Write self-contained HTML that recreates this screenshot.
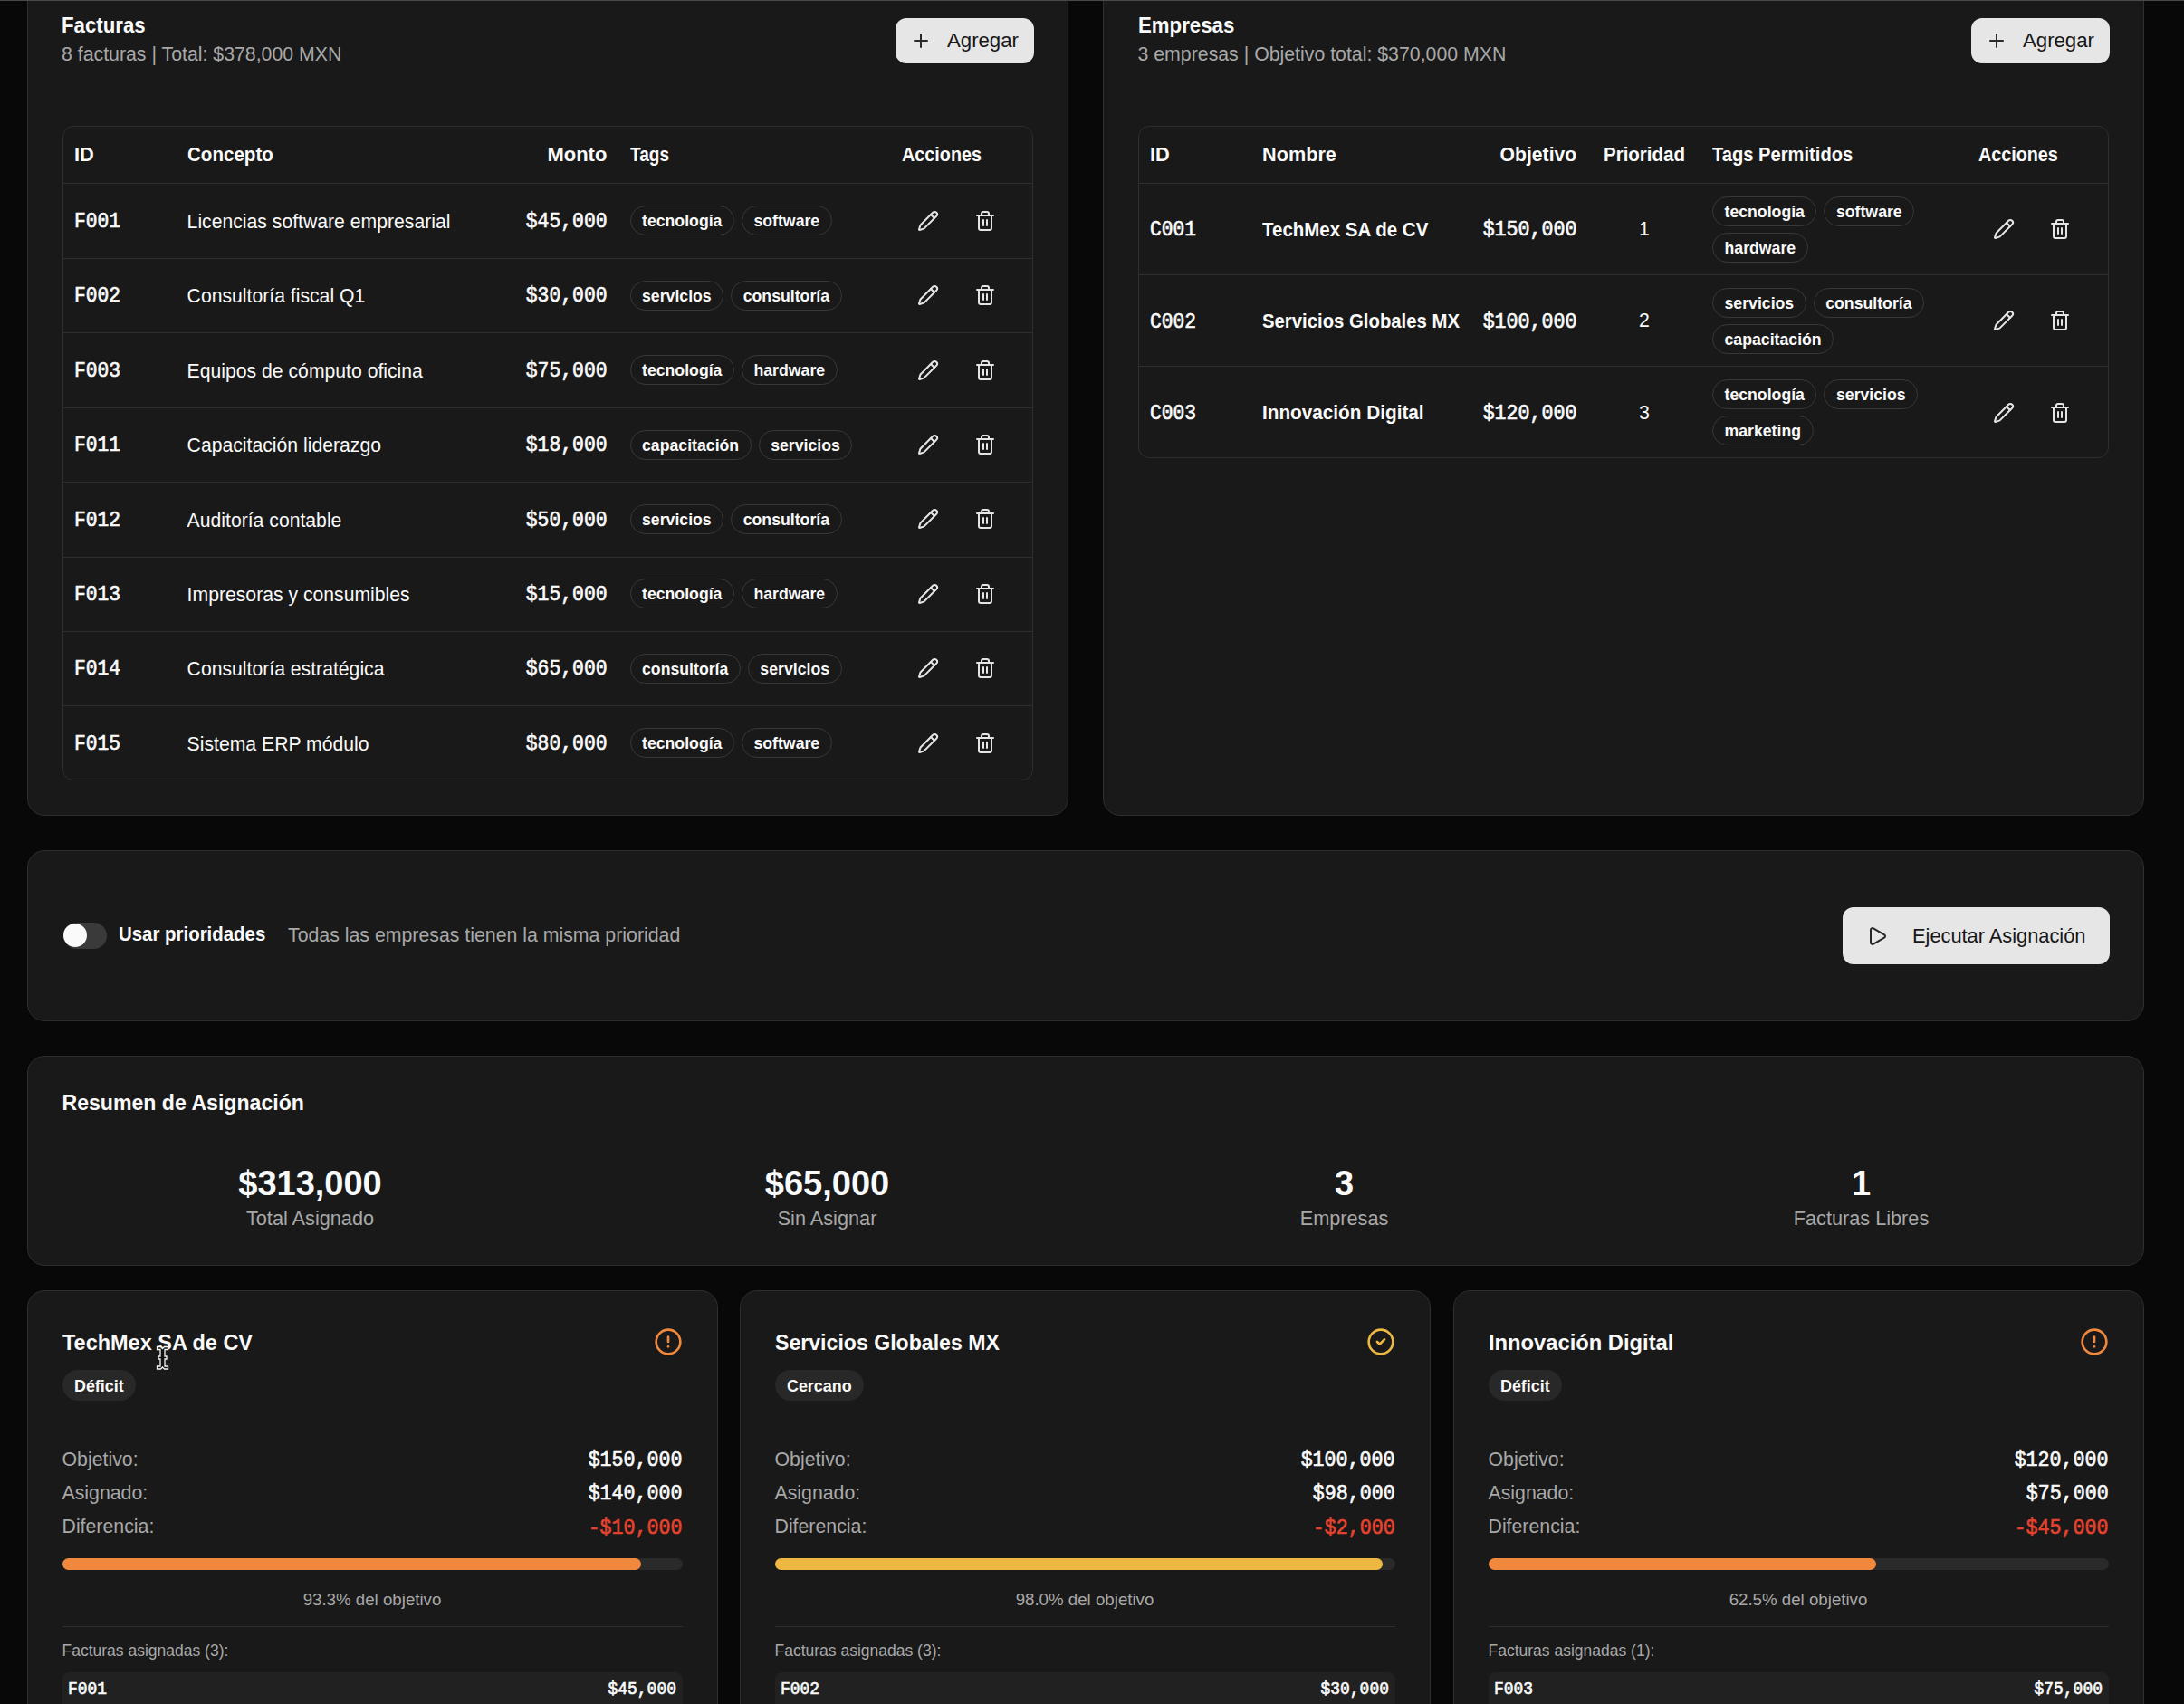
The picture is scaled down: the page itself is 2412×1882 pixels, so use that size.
<!DOCTYPE html><html><head><meta charset="utf-8"><style>
*{box-sizing:border-box;margin:0;padding:0}
html,body{width:2412px;height:1882px;overflow:hidden;background:#080808}
body{position:relative;font-family:"Liberation Sans", sans-serif}
.b{position:absolute}
.t{position:absolute;white-space:nowrap}
.s{font-family:"Liberation Sans", sans-serif}
.m{font-family:"Liberation Mono", monospace}
.pills{position:absolute;display:flex;flex-wrap:wrap;gap:7px 8px}
.pill{display:inline-flex;align-items:center;height:33px;padding:3px 12.5px 0;border:1px solid #383838;border-radius:999px;font-family:"Liberation Sans", sans-serif;font-weight:700;font-size:17.7px;color:#fafafa;white-space:nowrap;line-height:1}
.badge{position:absolute;display:inline-flex;align-items:center;height:34px;padding:4px 13.5px 0;background:#282828;border-radius:999px;font-family:"Liberation Sans", sans-serif;font-weight:700;font-size:17.9px;color:#fafafa;line-height:1}
</style></head><body>
<div class="b" style="left:0px;top:0px;width:2412px;height:1px;background:#4a4a4a;z-index:5;"></div>
<div class="b" style="left:30px;top:-60px;width:1150px;height:961px;background:#191919;border:1px solid #2e2e2e;border-radius:19px;"></div>
<div class="t s" style="left:68.00px;transform:scaleX(0.9066);transform-origin:0 0;top:12.51px;font-size:24.5px;line-height:29.4px;font-weight:700;color:#fafafa;">Facturas</div>
<div class="t s" style="left:68.00px;top:47.84px;font-size:21.3px;line-height:25.56px;color:#a8a8a8;">8 facturas | Total: $378,000 MXN</div>
<div class="b" style="left:989px;top:20px;width:153px;height:50px;background:#e6e6e6;border-radius:12px;"></div>
<svg class="b" style="left:1005px;top:33px" width="24" height="24" viewBox="0 0 24 24" fill="none" stroke="#2a2a2a" stroke-width="2" stroke-linecap="round" stroke-linejoin="round"><path d="M5 12h14"/><path d="M12 5v14"/></svg>
<div class="t s" style="left:1046.00px;top:31.98px;font-size:22.2px;line-height:26.64px;color:#171717;">Agregar</div>
<div class="b" style="left:69px;top:139px;width:1072px;height:723px;border:1px solid #2e2e2e;border-radius:12px;"></div>
<div class="t s" style="left:82.00px;top:157.76px;font-size:21.8px;line-height:26.16px;font-weight:700;color:#fafafa;">ID</div>
<div class="t s" style="left:206.60px;transform:scaleX(0.9431);transform-origin:0 0;top:157.76px;font-size:21.8px;line-height:26.16px;font-weight:700;color:#fafafa;">Concepto</div>
<div class="t s" style="right:1741.50px;transform:scaleX(1.0083);transform-origin:100% 0;top:157.76px;font-size:21.8px;line-height:26.16px;font-weight:700;color:#fafafa;">Monto</div>
<div class="t s" style="left:696.00px;transform:scaleX(0.8728);transform-origin:0 0;top:157.76px;font-size:21.8px;line-height:26.16px;font-weight:700;color:#fafafa;">Tags</div>
<div class="t s" style="left:996.00px;transform:scaleX(0.9079);transform-origin:0 0;top:157.76px;font-size:21.8px;line-height:26.16px;font-weight:700;color:#fafafa;">Acciones</div>
<div class="b" style="left:70px;top:202px;width:1070px;height:1px;background:#2e2e2e;"></div>
<div class="t m" style="left:82.00px;transform:scaleX(0.924);transform-origin:0 0;top:232.08px;font-size:23px;line-height:27.6px;font-weight:400;-webkit-text-stroke:0.65px currentColor;color:#fafafa;">F001</div>
<div class="t s" style="left:206.60px;top:231.93px;font-size:21.2px;line-height:25.44px;color:#fafafa;">Licencias software empresarial</div>
<div class="t m" style="right:1741.50px;transform:scaleX(0.93);transform-origin:100% 0;top:232.08px;font-size:23px;line-height:27.6px;font-weight:400;-webkit-text-stroke:0.65px currentColor;color:#fafafa;">$45,000</div>
<div class="pills" style="left:695.5px;top:227.30px;"><span class="pill">tecnología</span><span class="pill">software</span></div>
<svg class="b" style="left:1013px;top:231.8px" width="24" height="24" viewBox="0 0 24 24" fill="none" stroke="#e5e5e5" stroke-width="2" stroke-linecap="round" stroke-linejoin="round"><path d="M21.174 6.812a1 1 0 0 0-3.986-3.987L3.842 16.174a2 2 0 0 0-.5.83l-1.321 4.352a.5.5 0 0 0 .623.622l4.353-1.32a2 2 0 0 0 .83-.497z"/><path d="m15 5 4 4"/></svg>
<svg class="b" style="left:1075.5px;top:231.8px" width="24" height="24" viewBox="0 0 24 24" fill="none" stroke="#e5e5e5" stroke-width="2" stroke-linecap="round" stroke-linejoin="round"><path d="M3 6h18"/><path d="M19 6v14c0 1-1 2-2 2H7c-1 0-2-1-2-2V6"/><path d="M8 6V4c0-1 1-2 2-2h4c1 0 2 1 2 2v2"/><line x1="10" x2="10" y1="11" y2="17"/><line x1="14" x2="14" y1="11" y2="17"/></svg>
<div class="b" style="left:70px;top:285px;width:1070px;height:1px;background:#2e2e2e;"></div>
<div class="t m" style="left:82.00px;transform:scaleX(0.924);transform-origin:0 0;top:314.48px;font-size:23px;line-height:27.6px;font-weight:400;-webkit-text-stroke:0.65px currentColor;color:#fafafa;">F002</div>
<div class="t s" style="left:206.60px;top:314.33px;font-size:21.2px;line-height:25.44px;color:#fafafa;">Consultoría fiscal Q1</div>
<div class="t m" style="right:1741.50px;transform:scaleX(0.93);transform-origin:100% 0;top:314.48px;font-size:23px;line-height:27.6px;font-weight:400;-webkit-text-stroke:0.65px currentColor;color:#fafafa;">$30,000</div>
<div class="pills" style="left:695.5px;top:309.70px;"><span class="pill">servicios</span><span class="pill">consultoría</span></div>
<svg class="b" style="left:1013px;top:314.20000000000005px" width="24" height="24" viewBox="0 0 24 24" fill="none" stroke="#e5e5e5" stroke-width="2" stroke-linecap="round" stroke-linejoin="round"><path d="M21.174 6.812a1 1 0 0 0-3.986-3.987L3.842 16.174a2 2 0 0 0-.5.83l-1.321 4.352a.5.5 0 0 0 .623.622l4.353-1.32a2 2 0 0 0 .83-.497z"/><path d="m15 5 4 4"/></svg>
<svg class="b" style="left:1075.5px;top:314.20000000000005px" width="24" height="24" viewBox="0 0 24 24" fill="none" stroke="#e5e5e5" stroke-width="2" stroke-linecap="round" stroke-linejoin="round"><path d="M3 6h18"/><path d="M19 6v14c0 1-1 2-2 2H7c-1 0-2-1-2-2V6"/><path d="M8 6V4c0-1 1-2 2-2h4c1 0 2 1 2 2v2"/><line x1="10" x2="10" y1="11" y2="17"/><line x1="14" x2="14" y1="11" y2="17"/></svg>
<div class="b" style="left:70px;top:367px;width:1070px;height:1px;background:#2e2e2e;"></div>
<div class="t m" style="left:82.00px;transform:scaleX(0.924);transform-origin:0 0;top:396.88px;font-size:23px;line-height:27.6px;font-weight:400;-webkit-text-stroke:0.65px currentColor;color:#fafafa;">F003</div>
<div class="t s" style="left:206.60px;top:396.73px;font-size:21.2px;line-height:25.44px;color:#fafafa;">Equipos de cómputo oficina</div>
<div class="t m" style="right:1741.50px;transform:scaleX(0.93);transform-origin:100% 0;top:396.88px;font-size:23px;line-height:27.6px;font-weight:400;-webkit-text-stroke:0.65px currentColor;color:#fafafa;">$75,000</div>
<div class="pills" style="left:695.5px;top:392.10px;"><span class="pill">tecnología</span><span class="pill">hardware</span></div>
<svg class="b" style="left:1013px;top:396.6px" width="24" height="24" viewBox="0 0 24 24" fill="none" stroke="#e5e5e5" stroke-width="2" stroke-linecap="round" stroke-linejoin="round"><path d="M21.174 6.812a1 1 0 0 0-3.986-3.987L3.842 16.174a2 2 0 0 0-.5.83l-1.321 4.352a.5.5 0 0 0 .623.622l4.353-1.32a2 2 0 0 0 .83-.497z"/><path d="m15 5 4 4"/></svg>
<svg class="b" style="left:1075.5px;top:396.6px" width="24" height="24" viewBox="0 0 24 24" fill="none" stroke="#e5e5e5" stroke-width="2" stroke-linecap="round" stroke-linejoin="round"><path d="M3 6h18"/><path d="M19 6v14c0 1-1 2-2 2H7c-1 0-2-1-2-2V6"/><path d="M8 6V4c0-1 1-2 2-2h4c1 0 2 1 2 2v2"/><line x1="10" x2="10" y1="11" y2="17"/><line x1="14" x2="14" y1="11" y2="17"/></svg>
<div class="b" style="left:70px;top:450px;width:1070px;height:1px;background:#2e2e2e;"></div>
<div class="t m" style="left:82.00px;transform:scaleX(0.924);transform-origin:0 0;top:479.28px;font-size:23px;line-height:27.6px;font-weight:400;-webkit-text-stroke:0.65px currentColor;color:#fafafa;">F011</div>
<div class="t s" style="left:206.60px;top:479.13px;font-size:21.2px;line-height:25.44px;color:#fafafa;">Capacitación liderazgo</div>
<div class="t m" style="right:1741.50px;transform:scaleX(0.93);transform-origin:100% 0;top:479.28px;font-size:23px;line-height:27.6px;font-weight:400;-webkit-text-stroke:0.65px currentColor;color:#fafafa;">$18,000</div>
<div class="pills" style="left:695.5px;top:474.50px;"><span class="pill">capacitación</span><span class="pill">servicios</span></div>
<svg class="b" style="left:1013px;top:479.0px" width="24" height="24" viewBox="0 0 24 24" fill="none" stroke="#e5e5e5" stroke-width="2" stroke-linecap="round" stroke-linejoin="round"><path d="M21.174 6.812a1 1 0 0 0-3.986-3.987L3.842 16.174a2 2 0 0 0-.5.83l-1.321 4.352a.5.5 0 0 0 .623.622l4.353-1.32a2 2 0 0 0 .83-.497z"/><path d="m15 5 4 4"/></svg>
<svg class="b" style="left:1075.5px;top:479.0px" width="24" height="24" viewBox="0 0 24 24" fill="none" stroke="#e5e5e5" stroke-width="2" stroke-linecap="round" stroke-linejoin="round"><path d="M3 6h18"/><path d="M19 6v14c0 1-1 2-2 2H7c-1 0-2-1-2-2V6"/><path d="M8 6V4c0-1 1-2 2-2h4c1 0 2 1 2 2v2"/><line x1="10" x2="10" y1="11" y2="17"/><line x1="14" x2="14" y1="11" y2="17"/></svg>
<div class="b" style="left:70px;top:532px;width:1070px;height:1px;background:#2e2e2e;"></div>
<div class="t m" style="left:82.00px;transform:scaleX(0.924);transform-origin:0 0;top:561.68px;font-size:23px;line-height:27.6px;font-weight:400;-webkit-text-stroke:0.65px currentColor;color:#fafafa;">F012</div>
<div class="t s" style="left:206.60px;top:561.53px;font-size:21.2px;line-height:25.44px;color:#fafafa;">Auditoría contable</div>
<div class="t m" style="right:1741.50px;transform:scaleX(0.93);transform-origin:100% 0;top:561.68px;font-size:23px;line-height:27.6px;font-weight:400;-webkit-text-stroke:0.65px currentColor;color:#fafafa;">$50,000</div>
<div class="pills" style="left:695.5px;top:556.90px;"><span class="pill">servicios</span><span class="pill">consultoría</span></div>
<svg class="b" style="left:1013px;top:561.4000000000001px" width="24" height="24" viewBox="0 0 24 24" fill="none" stroke="#e5e5e5" stroke-width="2" stroke-linecap="round" stroke-linejoin="round"><path d="M21.174 6.812a1 1 0 0 0-3.986-3.987L3.842 16.174a2 2 0 0 0-.5.83l-1.321 4.352a.5.5 0 0 0 .623.622l4.353-1.32a2 2 0 0 0 .83-.497z"/><path d="m15 5 4 4"/></svg>
<svg class="b" style="left:1075.5px;top:561.4000000000001px" width="24" height="24" viewBox="0 0 24 24" fill="none" stroke="#e5e5e5" stroke-width="2" stroke-linecap="round" stroke-linejoin="round"><path d="M3 6h18"/><path d="M19 6v14c0 1-1 2-2 2H7c-1 0-2-1-2-2V6"/><path d="M8 6V4c0-1 1-2 2-2h4c1 0 2 1 2 2v2"/><line x1="10" x2="10" y1="11" y2="17"/><line x1="14" x2="14" y1="11" y2="17"/></svg>
<div class="b" style="left:70px;top:615px;width:1070px;height:1px;background:#2e2e2e;"></div>
<div class="t m" style="left:82.00px;transform:scaleX(0.924);transform-origin:0 0;top:644.08px;font-size:23px;line-height:27.6px;font-weight:400;-webkit-text-stroke:0.65px currentColor;color:#fafafa;">F013</div>
<div class="t s" style="left:206.60px;top:643.93px;font-size:21.2px;line-height:25.44px;color:#fafafa;">Impresoras y consumibles</div>
<div class="t m" style="right:1741.50px;transform:scaleX(0.93);transform-origin:100% 0;top:644.08px;font-size:23px;line-height:27.6px;font-weight:400;-webkit-text-stroke:0.65px currentColor;color:#fafafa;">$15,000</div>
<div class="pills" style="left:695.5px;top:639.30px;"><span class="pill">tecnología</span><span class="pill">hardware</span></div>
<svg class="b" style="left:1013px;top:643.8px" width="24" height="24" viewBox="0 0 24 24" fill="none" stroke="#e5e5e5" stroke-width="2" stroke-linecap="round" stroke-linejoin="round"><path d="M21.174 6.812a1 1 0 0 0-3.986-3.987L3.842 16.174a2 2 0 0 0-.5.83l-1.321 4.352a.5.5 0 0 0 .623.622l4.353-1.32a2 2 0 0 0 .83-.497z"/><path d="m15 5 4 4"/></svg>
<svg class="b" style="left:1075.5px;top:643.8px" width="24" height="24" viewBox="0 0 24 24" fill="none" stroke="#e5e5e5" stroke-width="2" stroke-linecap="round" stroke-linejoin="round"><path d="M3 6h18"/><path d="M19 6v14c0 1-1 2-2 2H7c-1 0-2-1-2-2V6"/><path d="M8 6V4c0-1 1-2 2-2h4c1 0 2 1 2 2v2"/><line x1="10" x2="10" y1="11" y2="17"/><line x1="14" x2="14" y1="11" y2="17"/></svg>
<div class="b" style="left:70px;top:697px;width:1070px;height:1px;background:#2e2e2e;"></div>
<div class="t m" style="left:82.00px;transform:scaleX(0.924);transform-origin:0 0;top:726.48px;font-size:23px;line-height:27.6px;font-weight:400;-webkit-text-stroke:0.65px currentColor;color:#fafafa;">F014</div>
<div class="t s" style="left:206.60px;top:726.33px;font-size:21.2px;line-height:25.44px;color:#fafafa;">Consultoría estratégica</div>
<div class="t m" style="right:1741.50px;transform:scaleX(0.93);transform-origin:100% 0;top:726.48px;font-size:23px;line-height:27.6px;font-weight:400;-webkit-text-stroke:0.65px currentColor;color:#fafafa;">$65,000</div>
<div class="pills" style="left:695.5px;top:721.70px;"><span class="pill">consultoría</span><span class="pill">servicios</span></div>
<svg class="b" style="left:1013px;top:726.2px" width="24" height="24" viewBox="0 0 24 24" fill="none" stroke="#e5e5e5" stroke-width="2" stroke-linecap="round" stroke-linejoin="round"><path d="M21.174 6.812a1 1 0 0 0-3.986-3.987L3.842 16.174a2 2 0 0 0-.5.83l-1.321 4.352a.5.5 0 0 0 .623.622l4.353-1.32a2 2 0 0 0 .83-.497z"/><path d="m15 5 4 4"/></svg>
<svg class="b" style="left:1075.5px;top:726.2px" width="24" height="24" viewBox="0 0 24 24" fill="none" stroke="#e5e5e5" stroke-width="2" stroke-linecap="round" stroke-linejoin="round"><path d="M3 6h18"/><path d="M19 6v14c0 1-1 2-2 2H7c-1 0-2-1-2-2V6"/><path d="M8 6V4c0-1 1-2 2-2h4c1 0 2 1 2 2v2"/><line x1="10" x2="10" y1="11" y2="17"/><line x1="14" x2="14" y1="11" y2="17"/></svg>
<div class="b" style="left:70px;top:779px;width:1070px;height:1px;background:#2e2e2e;"></div>
<div class="t m" style="left:82.00px;transform:scaleX(0.924);transform-origin:0 0;top:808.88px;font-size:23px;line-height:27.6px;font-weight:400;-webkit-text-stroke:0.65px currentColor;color:#fafafa;">F015</div>
<div class="t s" style="left:206.60px;top:808.73px;font-size:21.2px;line-height:25.44px;color:#fafafa;">Sistema ERP módulo</div>
<div class="t m" style="right:1741.50px;transform:scaleX(0.93);transform-origin:100% 0;top:808.88px;font-size:23px;line-height:27.6px;font-weight:400;-webkit-text-stroke:0.65px currentColor;color:#fafafa;">$80,000</div>
<div class="pills" style="left:695.5px;top:804.10px;"><span class="pill">tecnología</span><span class="pill">software</span></div>
<svg class="b" style="left:1013px;top:808.6000000000001px" width="24" height="24" viewBox="0 0 24 24" fill="none" stroke="#e5e5e5" stroke-width="2" stroke-linecap="round" stroke-linejoin="round"><path d="M21.174 6.812a1 1 0 0 0-3.986-3.987L3.842 16.174a2 2 0 0 0-.5.83l-1.321 4.352a.5.5 0 0 0 .623.622l4.353-1.32a2 2 0 0 0 .83-.497z"/><path d="m15 5 4 4"/></svg>
<svg class="b" style="left:1075.5px;top:808.6000000000001px" width="24" height="24" viewBox="0 0 24 24" fill="none" stroke="#e5e5e5" stroke-width="2" stroke-linecap="round" stroke-linejoin="round"><path d="M3 6h18"/><path d="M19 6v14c0 1-1 2-2 2H7c-1 0-2-1-2-2V6"/><path d="M8 6V4c0-1 1-2 2-2h4c1 0 2 1 2 2v2"/><line x1="10" x2="10" y1="11" y2="17"/><line x1="14" x2="14" y1="11" y2="17"/></svg>
<div class="b" style="left:1218px;top:-60px;width:1150px;height:961px;background:#191919;border:1px solid #2e2e2e;border-radius:19px;"></div>
<div class="t s" style="left:1256.50px;transform:scaleX(0.9075);transform-origin:0 0;top:12.51px;font-size:24.5px;line-height:29.4px;font-weight:700;color:#fafafa;">Empresas</div>
<div class="t s" style="left:1256.50px;top:47.84px;font-size:21.3px;line-height:25.56px;color:#a8a8a8;">3 empresas | Objetivo total: $370,000 MXN</div>
<div class="b" style="left:2177px;top:20px;width:153px;height:50px;background:#e6e6e6;border-radius:12px;"></div>
<svg class="b" style="left:2193px;top:33px" width="24" height="24" viewBox="0 0 24 24" fill="none" stroke="#2a2a2a" stroke-width="2" stroke-linecap="round" stroke-linejoin="round"><path d="M5 12h14"/><path d="M12 5v14"/></svg>
<div class="t s" style="left:2234.00px;top:31.98px;font-size:22.2px;line-height:26.64px;color:#171717;">Agregar</div>
<div class="b" style="left:1257px;top:139px;width:1072px;height:367px;border:1px solid #2e2e2e;border-radius:12px;"></div>
<div class="t s" style="left:1270.00px;top:157.76px;font-size:21.8px;line-height:26.16px;font-weight:700;color:#fafafa;">ID</div>
<div class="t s" style="left:1394.00px;transform:scaleX(0.9944);transform-origin:0 0;top:157.76px;font-size:21.8px;line-height:26.16px;font-weight:700;color:#fafafa;">Nombre</div>
<div class="t s" style="right:671.00px;transform:scaleX(0.9701);transform-origin:100% 0;top:157.76px;font-size:21.8px;line-height:26.16px;font-weight:700;color:#fafafa;">Objetivo</div>
<div class="t s" style="left:1815.80px;transform:translateX(-50%) scaleX(0.9406);top:157.76px;font-size:21.8px;line-height:26.16px;font-weight:700;color:#fafafa;">Prioridad</div>
<div class="t s" style="left:1891.00px;transform:scaleX(0.9240);transform-origin:0 0;top:157.76px;font-size:21.8px;line-height:26.16px;font-weight:700;color:#fafafa;">Tags Permitidos</div>
<div class="t s" style="left:2184.70px;transform:scaleX(0.9059);transform-origin:0 0;top:157.76px;font-size:21.8px;line-height:26.16px;font-weight:700;color:#fafafa;">Acciones</div>
<div class="b" style="left:1258px;top:202px;width:1070px;height:1px;background:#2e2e2e;"></div>
<div class="t m" style="left:1270.00px;transform:scaleX(0.924);transform-origin:0 0;top:241.48px;font-size:23px;line-height:27.6px;font-weight:400;-webkit-text-stroke:0.65px currentColor;color:#fafafa;">C001</div>
<div class="t s" style="left:1394.00px;transform:scaleX(0.9399);transform-origin:0 0;top:240.76px;font-size:21.8px;line-height:26.16px;font-weight:700;color:#fafafa;">TechMex SA de CV</div>
<div class="t m" style="right:671.00px;transform:scaleX(0.94);transform-origin:100% 0;top:241.48px;font-size:23px;line-height:27.6px;font-weight:400;-webkit-text-stroke:0.65px currentColor;color:#fafafa;">$150,000</div>
<div class="t s" style="left:1816.00px;transform:translateX(-50%) ;top:241.24px;font-size:21.3px;line-height:25.56px;color:#fafafa;">1</div>
<div class="pills" style="left:1891px;top:216.60px;width:250px;"><span class="pill">tecnología</span><span class="pill">software</span><span class="pill">hardware</span></div>
<svg class="b" style="left:2201.4px;top:241.2px" width="24" height="24" viewBox="0 0 24 24" fill="none" stroke="#e5e5e5" stroke-width="2" stroke-linecap="round" stroke-linejoin="round"><path d="M21.174 6.812a1 1 0 0 0-3.986-3.987L3.842 16.174a2 2 0 0 0-.5.83l-1.321 4.352a.5.5 0 0 0 .623.622l4.353-1.32a2 2 0 0 0 .83-.497z"/><path d="m15 5 4 4"/></svg>
<svg class="b" style="left:2263.3px;top:241.2px" width="24" height="24" viewBox="0 0 24 24" fill="none" stroke="#e5e5e5" stroke-width="2" stroke-linecap="round" stroke-linejoin="round"><path d="M3 6h18"/><path d="M19 6v14c0 1-1 2-2 2H7c-1 0-2-1-2-2V6"/><path d="M8 6V4c0-1 1-2 2-2h4c1 0 2 1 2 2v2"/><line x1="10" x2="10" y1="11" y2="17"/><line x1="14" x2="14" y1="11" y2="17"/></svg>
<div class="b" style="left:1258px;top:303px;width:1070px;height:1px;background:#2e2e2e;"></div>
<div class="t m" style="left:1270.00px;transform:scaleX(0.924);transform-origin:0 0;top:342.68px;font-size:23px;line-height:27.6px;font-weight:400;-webkit-text-stroke:0.65px currentColor;color:#fafafa;">C002</div>
<div class="t s" style="left:1394.00px;transform:scaleX(0.9324);transform-origin:0 0;top:341.96px;font-size:21.8px;line-height:26.16px;font-weight:700;color:#fafafa;">Servicios Globales MX</div>
<div class="t m" style="right:671.00px;transform:scaleX(0.94);transform-origin:100% 0;top:342.68px;font-size:23px;line-height:27.6px;font-weight:400;-webkit-text-stroke:0.65px currentColor;color:#fafafa;">$100,000</div>
<div class="t s" style="left:1816.00px;transform:translateX(-50%) ;top:342.44px;font-size:21.3px;line-height:25.56px;color:#fafafa;">2</div>
<div class="pills" style="left:1891px;top:317.80px;width:250px;"><span class="pill">servicios</span><span class="pill">consultoría</span><span class="pill">capacitación</span></div>
<svg class="b" style="left:2201.4px;top:342.4px" width="24" height="24" viewBox="0 0 24 24" fill="none" stroke="#e5e5e5" stroke-width="2" stroke-linecap="round" stroke-linejoin="round"><path d="M21.174 6.812a1 1 0 0 0-3.986-3.987L3.842 16.174a2 2 0 0 0-.5.83l-1.321 4.352a.5.5 0 0 0 .623.622l4.353-1.32a2 2 0 0 0 .83-.497z"/><path d="m15 5 4 4"/></svg>
<svg class="b" style="left:2263.3px;top:342.4px" width="24" height="24" viewBox="0 0 24 24" fill="none" stroke="#e5e5e5" stroke-width="2" stroke-linecap="round" stroke-linejoin="round"><path d="M3 6h18"/><path d="M19 6v14c0 1-1 2-2 2H7c-1 0-2-1-2-2V6"/><path d="M8 6V4c0-1 1-2 2-2h4c1 0 2 1 2 2v2"/><line x1="10" x2="10" y1="11" y2="17"/><line x1="14" x2="14" y1="11" y2="17"/></svg>
<div class="b" style="left:1258px;top:404px;width:1070px;height:1px;background:#2e2e2e;"></div>
<div class="t m" style="left:1270.00px;transform:scaleX(0.924);transform-origin:0 0;top:443.88px;font-size:23px;line-height:27.6px;font-weight:400;-webkit-text-stroke:0.65px currentColor;color:#fafafa;">C003</div>
<div class="t s" style="left:1394.00px;transform:scaleX(0.9514);transform-origin:0 0;top:443.16px;font-size:21.8px;line-height:26.16px;font-weight:700;color:#fafafa;">Innovación Digital</div>
<div class="t m" style="right:671.00px;transform:scaleX(0.94);transform-origin:100% 0;top:443.88px;font-size:23px;line-height:27.6px;font-weight:400;-webkit-text-stroke:0.65px currentColor;color:#fafafa;">$120,000</div>
<div class="t s" style="left:1816.00px;transform:translateX(-50%) ;top:443.64px;font-size:21.3px;line-height:25.56px;color:#fafafa;">3</div>
<div class="pills" style="left:1891px;top:419.00px;width:250px;"><span class="pill">tecnología</span><span class="pill">servicios</span><span class="pill">marketing</span></div>
<svg class="b" style="left:2201.4px;top:443.6px" width="24" height="24" viewBox="0 0 24 24" fill="none" stroke="#e5e5e5" stroke-width="2" stroke-linecap="round" stroke-linejoin="round"><path d="M21.174 6.812a1 1 0 0 0-3.986-3.987L3.842 16.174a2 2 0 0 0-.5.83l-1.321 4.352a.5.5 0 0 0 .623.622l4.353-1.32a2 2 0 0 0 .83-.497z"/><path d="m15 5 4 4"/></svg>
<svg class="b" style="left:2263.3px;top:443.6px" width="24" height="24" viewBox="0 0 24 24" fill="none" stroke="#e5e5e5" stroke-width="2" stroke-linecap="round" stroke-linejoin="round"><path d="M3 6h18"/><path d="M19 6v14c0 1-1 2-2 2H7c-1 0-2-1-2-2V6"/><path d="M8 6V4c0-1 1-2 2-2h4c1 0 2 1 2 2v2"/><line x1="10" x2="10" y1="11" y2="17"/><line x1="14" x2="14" y1="11" y2="17"/></svg>
<div class="b" style="left:30px;top:939px;width:2338px;height:189px;background:#191919;border:1px solid #2e2e2e;border-radius:19px;"></div>
<div class="b" style="left:70px;top:1018.5px;width:48px;height:29.5px;background:#3a3a3a;border-radius:15px;"></div>
<div class="b" style="left:70px;top:1019.5px;width:26px;height:26.0px;background:#fafafa;border-radius:50%;"></div>
<div class="t s" style="left:130.50px;transform:scaleX(0.9204);transform-origin:0 0;top:1018.98px;font-size:22.2px;line-height:26.64px;font-weight:700;color:#fafafa;">Usar prioridades</div>
<div class="t s" style="left:318.00px;top:1021.34px;font-size:21.3px;line-height:25.56px;color:#a8a8a8;">Todas las empresas tienen la misma prioridad</div>
<div class="b" style="left:2035px;top:1002px;width:295px;height:63px;background:#e6e6e6;border-radius:12px;"></div>
<svg class="b" style="left:2061px;top:1021.5px" width="24" height="24" viewBox="0 0 24 24" fill="none" stroke="#262626" stroke-width="2" stroke-linecap="round" stroke-linejoin="round"><path d="M5 5a2 2 0 0 1 3.008-1.728l11.997 6.998a2 2 0 0 1 .003 3.458l-12 7A2 2 0 0 1 5 19z"/></svg>
<div class="t s" style="left:2112.00px;top:1020.76px;font-size:21.8px;line-height:26.16px;color:#171717;">Ejecutar Asignación</div>
<div class="b" style="left:30px;top:1166px;width:2338px;height:232px;background:#191919;border:1px solid #2e2e2e;border-radius:19px;"></div>
<div class="t s" style="left:68.50px;top:1204.53px;font-size:23.1px;line-height:27.72px;font-weight:700;color:#fafafa;">Resumen de Asignación</div>
<div class="t s" style="left:342.50px;transform:translateX(-50%) ;top:1284.53px;font-size:38px;line-height:45.6px;font-weight:700;color:#fafafa;">$313,000</div>
<div class="t s" style="left:342.50px;transform:translateX(-50%) ;top:1332.96px;font-size:21.7px;line-height:26.04px;color:#a8a8a8;">Total Asignado</div>
<div class="t s" style="left:913.50px;transform:translateX(-50%) ;top:1284.53px;font-size:38px;line-height:45.6px;font-weight:700;color:#fafafa;">$65,000</div>
<div class="t s" style="left:913.50px;transform:translateX(-50%) ;top:1332.96px;font-size:21.7px;line-height:26.04px;color:#a8a8a8;">Sin Asignar</div>
<div class="t s" style="left:1484.50px;transform:translateX(-50%) ;top:1284.53px;font-size:38px;line-height:45.6px;font-weight:700;color:#fafafa;">3</div>
<div class="t s" style="left:1484.50px;transform:translateX(-50%) ;top:1332.96px;font-size:21.7px;line-height:26.04px;color:#a8a8a8;">Empresas</div>
<div class="t s" style="left:2055.50px;transform:translateX(-50%) ;top:1284.53px;font-size:38px;line-height:45.6px;font-weight:700;color:#fafafa;">1</div>
<div class="t s" style="left:2055.50px;transform:translateX(-50%) ;top:1332.96px;font-size:21.7px;line-height:26.04px;color:#a8a8a8;">Facturas Libres</div>
<div class="b" style="left:30px;top:1425px;width:763px;height:535px;background:#191919;border:1px solid #2e2e2e;border-radius:19px;"></div>
<div class="t s" style="left:68.50px;transform:scaleX(0.9704);transform-origin:0 0;top:1468.29px;font-size:24.2px;line-height:29.04px;font-weight:700;color:#fafafa;">TechMex SA de CV</div>
<svg class="b" style="left:721.5px;top:1466px" width="32" height="32" viewBox="0 0 24 24" fill="none" stroke="#f0883e" stroke-width="2" stroke-linecap="round" stroke-linejoin="round"><circle cx="12" cy="12" r="10"/><line x1="12" x2="12" y1="8" y2="12"/><line x1="12" x2="12.01" y1="16" y2="16"/></svg>
<div class="badge" style="left:68.5px;top:1513px;">Déficit</div>
<div class="t s" style="left:68.50px;top:1599.74px;font-size:21.3px;line-height:25.56px;color:#a8a8a8;">Objetivo:</div>
<div class="t m" style="right:1658.50px;transform:scaleX(0.94);transform-origin:100% 0;top:1599.98px;font-size:23px;line-height:27.6px;font-weight:400;-webkit-text-stroke:0.65px currentColor;color:#fafafa;">$150,000</div>
<div class="t s" style="left:68.50px;top:1637.04px;font-size:21.3px;line-height:25.56px;color:#a8a8a8;">Asignado:</div>
<div class="t m" style="right:1658.50px;transform:scaleX(0.94);transform-origin:100% 0;top:1637.28px;font-size:23px;line-height:27.6px;font-weight:400;-webkit-text-stroke:0.65px currentColor;color:#fafafa;">$140,000</div>
<div class="t s" style="left:68.50px;top:1674.34px;font-size:21.3px;line-height:25.56px;color:#a8a8a8;">Diferencia:</div>
<div class="t m" style="right:1658.50px;transform:scaleX(0.94);transform-origin:100% 0;top:1674.58px;font-size:23px;line-height:27.6px;font-weight:400;-webkit-text-stroke:0.65px currentColor;color:#e5432f;">-$10,000</div>
<div class="b" style="left:68.5px;top:1721px;width:685.0px;height:13px;background:#2a2a2a;border-radius:7px;"></div>
<div class="b" style="left:68.5px;top:1721px;width:639.1px;height:13px;background:#f0883e;border-radius:7px;"></div>
<div class="t s" style="left:411.00px;transform:translateX(-50%) ;top:1755.80px;font-size:18.7px;line-height:22.44px;color:#a8a8a8;">93.3% del objetivo</div>
<div class="b" style="left:68.5px;top:1796px;width:685.0px;height:1px;background:#2e2e2e;"></div>
<div class="t s" style="left:68.50px;top:1813.33px;font-size:17.5px;line-height:21.0px;color:#a8a8a8;">Facturas asignadas (3):</div>
<div class="b" style="left:68.5px;top:1847px;width:685.0px;height:53px;background:#212121;border-radius:8px;"></div>
<div class="t m" style="left:75.00px;transform:scaleX(0.92);transform-origin:0 0;top:1854.71px;font-size:19.5px;line-height:23.4px;font-weight:400;-webkit-text-stroke:0.65px currentColor;color:#fafafa;">F001</div>
<div class="t m" style="right:1665.00px;transform:scaleX(0.92);transform-origin:100% 0;top:1854.71px;font-size:19.5px;line-height:23.4px;font-weight:400;-webkit-text-stroke:0.65px currentColor;color:#fafafa;">$45,000</div>
<div class="b" style="left:817px;top:1425px;width:763px;height:535px;background:#191919;border:1px solid #2e2e2e;border-radius:19px;"></div>
<div class="t s" style="left:855.50px;transform:scaleX(0.9555);transform-origin:0 0;top:1468.29px;font-size:24.2px;line-height:29.04px;font-weight:700;color:#fafafa;">Servicios Globales MX</div>
<svg class="b" style="left:1508.5px;top:1466px" width="32" height="32" viewBox="0 0 24 24" fill="none" stroke="#ecb841" stroke-width="2" stroke-linecap="round" stroke-linejoin="round"><circle cx="12" cy="12" r="10"/><path d="m9 12 2 2 4-4"/></svg>
<div class="badge" style="left:855.5px;top:1513px;">Cercano</div>
<div class="t s" style="left:855.50px;top:1599.74px;font-size:21.3px;line-height:25.56px;color:#a8a8a8;">Objetivo:</div>
<div class="t m" style="right:871.50px;transform:scaleX(0.94);transform-origin:100% 0;top:1599.98px;font-size:23px;line-height:27.6px;font-weight:400;-webkit-text-stroke:0.65px currentColor;color:#fafafa;">$100,000</div>
<div class="t s" style="left:855.50px;top:1637.04px;font-size:21.3px;line-height:25.56px;color:#a8a8a8;">Asignado:</div>
<div class="t m" style="right:871.50px;transform:scaleX(0.94);transform-origin:100% 0;top:1637.28px;font-size:23px;line-height:27.6px;font-weight:400;-webkit-text-stroke:0.65px currentColor;color:#fafafa;">$98,000</div>
<div class="t s" style="left:855.50px;top:1674.34px;font-size:21.3px;line-height:25.56px;color:#a8a8a8;">Diferencia:</div>
<div class="t m" style="right:871.50px;transform:scaleX(0.94);transform-origin:100% 0;top:1674.58px;font-size:23px;line-height:27.6px;font-weight:400;-webkit-text-stroke:0.65px currentColor;color:#e5432f;">-$2,000</div>
<div class="b" style="left:855.5px;top:1721px;width:685.0px;height:13px;background:#2a2a2a;border-radius:7px;"></div>
<div class="b" style="left:855.5px;top:1721px;width:671.3px;height:13px;background:#ecb841;border-radius:7px;"></div>
<div class="t s" style="left:1198.00px;transform:translateX(-50%) ;top:1755.80px;font-size:18.7px;line-height:22.44px;color:#a8a8a8;">98.0% del objetivo</div>
<div class="b" style="left:855.5px;top:1796px;width:685.0px;height:1px;background:#2e2e2e;"></div>
<div class="t s" style="left:855.50px;top:1813.33px;font-size:17.5px;line-height:21.0px;color:#a8a8a8;">Facturas asignadas (3):</div>
<div class="b" style="left:855.5px;top:1847px;width:685.0px;height:53px;background:#212121;border-radius:8px;"></div>
<div class="t m" style="left:862.00px;transform:scaleX(0.92);transform-origin:0 0;top:1854.71px;font-size:19.5px;line-height:23.4px;font-weight:400;-webkit-text-stroke:0.65px currentColor;color:#fafafa;">F002</div>
<div class="t m" style="right:878.00px;transform:scaleX(0.92);transform-origin:100% 0;top:1854.71px;font-size:19.5px;line-height:23.4px;font-weight:400;-webkit-text-stroke:0.65px currentColor;color:#fafafa;">$30,000</div>
<div class="b" style="left:1605px;top:1425px;width:763px;height:535px;background:#191919;border:1px solid #2e2e2e;border-radius:19px;"></div>
<div class="t s" style="left:1643.50px;transform:scaleX(0.9812);transform-origin:0 0;top:1468.29px;font-size:24.2px;line-height:29.04px;font-weight:700;color:#fafafa;">Innovación Digital</div>
<svg class="b" style="left:2296.5px;top:1466px" width="32" height="32" viewBox="0 0 24 24" fill="none" stroke="#f0883e" stroke-width="2" stroke-linecap="round" stroke-linejoin="round"><circle cx="12" cy="12" r="10"/><line x1="12" x2="12" y1="8" y2="12"/><line x1="12" x2="12.01" y1="16" y2="16"/></svg>
<div class="badge" style="left:1643.5px;top:1513px;">Déficit</div>
<div class="t s" style="left:1643.50px;top:1599.74px;font-size:21.3px;line-height:25.56px;color:#a8a8a8;">Objetivo:</div>
<div class="t m" style="right:83.50px;transform:scaleX(0.94);transform-origin:100% 0;top:1599.98px;font-size:23px;line-height:27.6px;font-weight:400;-webkit-text-stroke:0.65px currentColor;color:#fafafa;">$120,000</div>
<div class="t s" style="left:1643.50px;top:1637.04px;font-size:21.3px;line-height:25.56px;color:#a8a8a8;">Asignado:</div>
<div class="t m" style="right:83.50px;transform:scaleX(0.94);transform-origin:100% 0;top:1637.28px;font-size:23px;line-height:27.6px;font-weight:400;-webkit-text-stroke:0.65px currentColor;color:#fafafa;">$75,000</div>
<div class="t s" style="left:1643.50px;top:1674.34px;font-size:21.3px;line-height:25.56px;color:#a8a8a8;">Diferencia:</div>
<div class="t m" style="right:83.50px;transform:scaleX(0.94);transform-origin:100% 0;top:1674.58px;font-size:23px;line-height:27.6px;font-weight:400;-webkit-text-stroke:0.65px currentColor;color:#e5432f;">-$45,000</div>
<div class="b" style="left:1643.5px;top:1721px;width:685.0px;height:13px;background:#2a2a2a;border-radius:7px;"></div>
<div class="b" style="left:1643.5px;top:1721px;width:428.0999999999999px;height:13px;background:#f0883e;border-radius:7px;"></div>
<div class="t s" style="left:1986.00px;transform:translateX(-50%) ;top:1755.80px;font-size:18.7px;line-height:22.44px;color:#a8a8a8;">62.5% del objetivo</div>
<div class="b" style="left:1643.5px;top:1796px;width:685.0px;height:1px;background:#2e2e2e;"></div>
<div class="t s" style="left:1643.50px;top:1813.33px;font-size:17.5px;line-height:21.0px;color:#a8a8a8;">Facturas asignadas (1):</div>
<div class="b" style="left:1643.5px;top:1847px;width:685.0px;height:53px;background:#212121;border-radius:8px;"></div>
<div class="t m" style="left:1650.00px;transform:scaleX(0.92);transform-origin:0 0;top:1854.71px;font-size:19.5px;line-height:23.4px;font-weight:400;-webkit-text-stroke:0.65px currentColor;color:#fafafa;">F003</div>
<div class="t m" style="right:90.00px;transform:scaleX(0.92);transform-origin:100% 0;top:1854.71px;font-size:19.5px;line-height:23.4px;font-weight:400;-webkit-text-stroke:0.65px currentColor;color:#fafafa;">$75,000</div>
<svg class="b" style="left:172px;top:1486px;z-index:6" width="15" height="29" viewBox="0 0 15 29"><path d="M1.5 1.5h4l2 2 2-2h4v3h-3.5v7.5h2v3h-2v8h3.5v3h-4l-2-2-2 2h-4v-3h3.5v-8h-2v-3h2v-7.5h-3.5z" fill="#111" stroke="#f5f5f5" stroke-width="1.3"/></svg>
</body></html>
